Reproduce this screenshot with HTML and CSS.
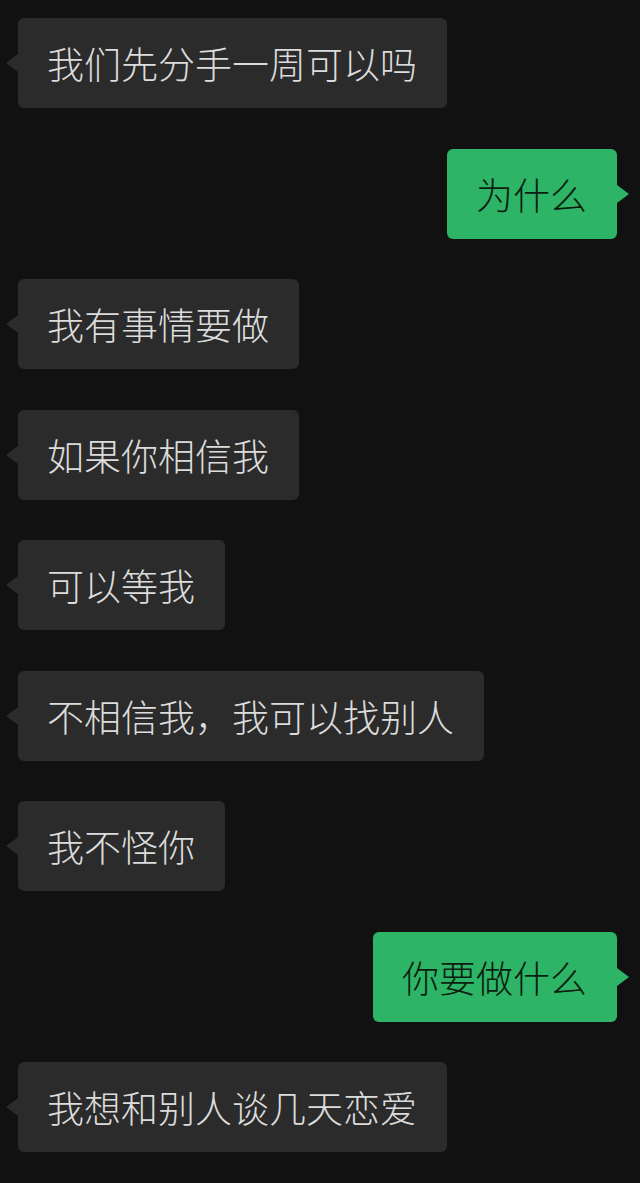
FILE: index.html
```html
<!DOCTYPE html>
<html lang="zh-CN">
<head>
    <meta charset="UTF-8">
    <meta name="viewport" content="width=device-width, initial-scale=1.0">
    <title>聊天记录</title>
    <link rel="stylesheet" href="styles.css">
</head>
<body>
    <div class="chat">
        <div class="row left"><div class="bubble">我们先分手一周可以吗</div></div>
        <div class="row right"><div class="bubble">为什么</div></div>
        <div class="row left"><div class="bubble">我有事情要做</div></div>
        <div class="row left"><div class="bubble">如果你相信我</div></div>
        <div class="row left"><div class="bubble">可以等我</div></div>
        <div class="row left"><div class="bubble">不相信我，我可以找别人</div></div>
        <div class="row left"><div class="bubble">我不怪你</div></div>
        <div class="row right"><div class="bubble">你要做什么</div></div>
        <div class="row left"><div class="bubble">我想和别人谈几天恋爱</div></div>
    </div>
</body>
</html>
```
FILE: styles.css
```css
body {
    margin: 0;
    background: #111111;
    font-family: "Noto Sans CJK SC", "Noto Sans", sans-serif;
}
.chat {
    display: flex;
    flex-direction: column;
    gap: 40.5px;
    padding: 18px 23px 0 18px;
}
.row {
    display: flex;
}
.row.right {
    justify-content: flex-end;
}
.bubble {
    position: relative;
    height: 90px;
    line-height: 90px;
    padding: 0 30px 0 29px;
    font-size: 37px;
    font-weight: 300;
    border-radius: 6px;
    white-space: nowrap;
}
.left .bubble {
    background: #2b2b2b;
    color: #dcdcdc;
}
.right .bubble {
    background: #2eb466;
    color: #0b1e10;
}
/* little tails */
.bubble::before {
    content: "";
    position: absolute;
    top: 36px;
    border-top: 9px solid transparent;
    border-bottom: 9px solid transparent;
}
.left .bubble::before {
    left: -12px;
    border-right: 12px solid #2b2b2b;
}
.right .bubble::before {
    right: -12px;
    border-left: 12px solid #2eb466;
}
```
